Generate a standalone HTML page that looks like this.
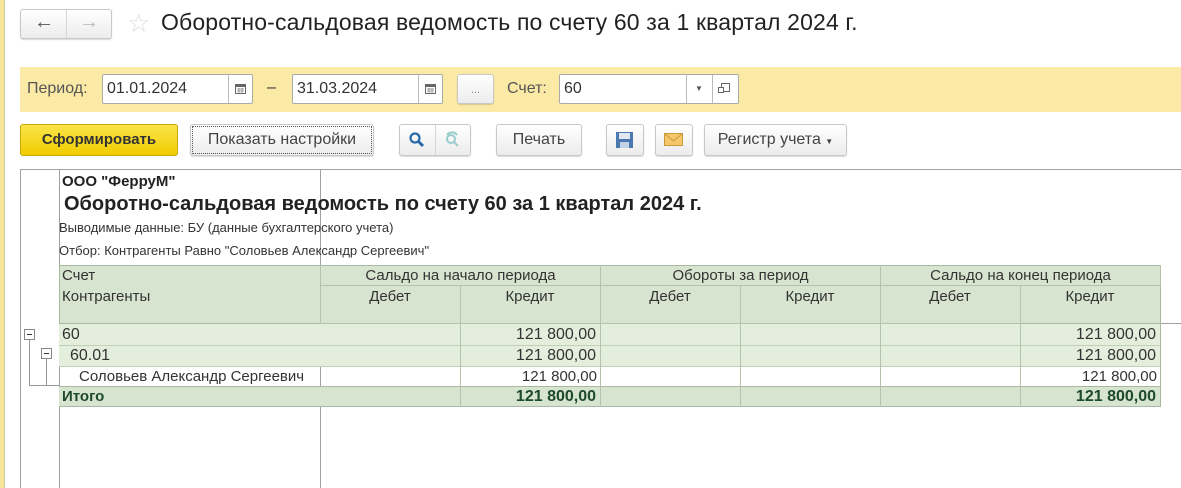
<!DOCTYPE html>
<html><head><meta charset="utf-8"><style>
*{margin:0;padding:0;box-sizing:border-box}
body{width:1181px;height:488px;overflow:hidden;background:#fff;font-family:"Liberation Sans",sans-serif;position:relative;color:#333}
.a{position:absolute}
.btn{position:absolute;border:1px solid #c8c8c8;border-radius:3px;background:linear-gradient(#fff,#ececec);box-shadow:0 1px 1px rgba(0,0,0,.15);font-size:15px;color:#444;text-align:center}
.inp{position:absolute;border:1px solid #aaa;border-radius:2px;background:#fff;font-size:16px;color:#333;padding-left:4px;line-height:28px}
.t{position:absolute;font-size:15px;white-space:nowrap}
.c{position:absolute;border-right:1px solid #b5c2ad;border-bottom:1px solid #b5c2ad}
</style></head><body>
<div class="a" style="left:0;top:0;width:5px;height:488px;background:#f8e59a;border-right:1px solid #c9c9a0"></div>
<div class="btn" style="left:20px;top:9px;width:92px;height:30px"></div>
<div class="a" style="left:66px;top:10px;width:1px;height:28px;background:#d5d5d5"></div>
<div class="t" style="left:34px;top:11px;font-size:20px;color:#555">&#8592;</div>
<div class="t" style="left:79px;top:11px;font-size:20px;color:#bbb">&#8594;</div>
<div class="t" style="left:127px;top:8px;font-size:26px;color:#ddd">&#9734;</div>
<div class="t" style="left:161px;top:9px;font-size:23px;letter-spacing:0.15px;color:#222">Оборотно-сальдовая ведомость по счету 60 за 1 квартал 2024 г.</div>
<div class="a" style="left:20px;top:67px;width:1161px;height:45px;background:#fbe9a6"></div>
<div class="t" style="left:27px;top:80px;font-size:16px;color:#555">Период:</div>
<div class="inp" style="left:102px;top:74px;width:151px;height:30px">01.01.2024</div>
<div class="a" style="left:228px;top:75px;width:1px;height:28px;background:#bbb"></div>
<svg class="a" style="left:235px;top:83px" width="11" height="11"><rect x="0.5" y="1.5" width="10" height="9" fill="#fff" stroke="#666"/><rect x="0.5" y="1.5" width="10" height="2.5" fill="#666"/><path d="M2 6h7M2 8h7M4 5v5M7 5v5" stroke="#888" stroke-width="0.8"/></svg>
<div class="t" style="left:267px;top:79px;font-size:16px">–</div>
<div class="inp" style="left:292px;top:74px;width:151px;height:30px">31.03.2024</div>
<div class="a" style="left:418px;top:75px;width:1px;height:28px;background:#bbb"></div>
<svg class="a" style="left:425px;top:83px" width="11" height="11"><rect x="0.5" y="1.5" width="10" height="9" fill="#fff" stroke="#666"/><rect x="0.5" y="1.5" width="10" height="2.5" fill="#666"/><path d="M2 6h7M2 8h7M4 5v5M7 5v5" stroke="#888" stroke-width="0.8"/></svg>
<div class="btn" style="left:457px;top:74px;width:37px;height:30px;line-height:30px;font-size:11px;color:#888">...</div>
<div class="t" style="left:507px;top:80px;font-size:16px;color:#555">Счет:</div>
<div class="inp" style="left:559px;top:74px;width:180px;height:30px">60</div>
<div class="a" style="left:686px;top:75px;width:1px;height:28px;background:#bbb"></div>
<div class="a" style="left:712px;top:75px;width:1px;height:28px;background:#bbb"></div>
<div class="t" style="left:695px;top:84px;font-size:8px;color:#555">&#9660;</div>
<div class="a" style="left:721px;top:83px;width:9px;height:9px;border:1px solid #666"></div>
<div class="a" style="left:718px;top:87px;width:6px;height:6px;border:1px solid #666;background:#fff"></div>
<div class="a" style="left:20px;top:124px;width:158px;height:32px;border:1px solid #c9a800;border-radius:3px;background:linear-gradient(#fbe44a,#f1cc00);font-weight:bold;font-size:15px;line-height:30px;text-align:center;color:#333">Сформировать</div>
<div class="btn" style="left:190px;top:124px;width:184px;height:32px;line-height:30px;outline:1px dotted #555;outline-offset:-3px;font-size:16px">Показать настройки</div>
<div class="btn" style="left:399px;top:124px;width:72px;height:32px"></div>
<div class="a" style="left:435px;top:125px;width:1px;height:30px;background:#d5d5d5"></div>
<svg class="a" style="left:408px;top:131px" width="18" height="18"><circle cx="7" cy="7" r="4.5" stroke="#2a6aa8" stroke-width="2.2" fill="none"/><path d="M10 10l5 5" stroke="#2a6aa8" stroke-width="3"/></svg>
<svg class="a" style="left:444px;top:131px" width="18" height="18"><circle cx="7" cy="8" r="4" stroke="#9cc" stroke-width="2" fill="none"/><path d="M10 11l4 4M3 4a6 6 0 0 1 10 0" stroke="#9cc" stroke-width="2" fill="none"/></svg>
<div class="btn" style="left:496px;top:124px;width:86px;height:32px;line-height:30px;font-size:16px">Печать</div>
<div class="btn" style="left:606px;top:124px;width:38px;height:32px"></div>
<svg class="a" style="left:615px;top:131px" width="20" height="18"><rect x="1" y="1" width="17" height="16" fill="#4a78b0"/><rect x="4" y="2" width="11" height="6" fill="#dfe8f3"/><rect x="5" y="11" width="9" height="6" fill="#c4d2e6"/></svg>
<div class="btn" style="left:655px;top:124px;width:38px;height:32px"></div>
<svg class="a" style="left:664px;top:133px" width="20" height="14"><rect x="0.5" y="0.5" width="18" height="12" fill="#f5c66a" stroke="#c99a3a"/><path d="M1 1l8.5 7 8.5-7" stroke="#c99a3a" fill="none"/></svg>
<div class="btn" style="left:704px;top:124px;width:143px;height:32px;line-height:30px;font-size:16px">Регистр учета <span style="font-size:8px">&#9660;</span></div>
<div class="a" style="left:20px;top:169px;width:1161px;height:1px;background:#a0a0a0"></div>
<div class="a" style="left:20px;top:169px;width:1px;height:319px;background:#a0a0a0"></div>
<div class="a" style="left:59px;top:169px;width:1px;height:319px;background:#a0a0a0"></div>
<div class="a" style="left:320px;top:169px;width:1px;height:319px;background:#a0a0a0"></div>
<div class="a" style="left:1160px;top:323px;width:21px;height:1px;background:#a0a0a0"></div>
<div class="t" style="left:62px;top:173px;font-weight:bold;font-size:15px;color:#222">ООО "ФерруМ"</div>
<div class="t" style="left:64px;top:193px;font-weight:bold;font-size:20px;color:#222">Оборотно-сальдовая ведомость по счету 60 за 1 квартал 2024 г.</div>
<div class="t" style="left:59px;top:220px;font-size:13px;color:#333">Выводимые данные: БУ (данные бухгалтерского учета)</div>
<div class="t" style="left:59px;top:243px;font-size:13px;color:#333">Отбор: Контрагенты Равно "Соловьев Александр Сергеевич"</div>
<div class="a" style="left:59px;top:265px;width:1102px;height:59px;background:#d7e4cf;border:1px solid #a9b8a0"></div>
<div class="c" style="left:59px;top:265px;width:262px;height:59px;border-bottom:none"></div>
<div class="c" style="left:320px;top:265px;width:281px;height:21px"></div>
<div class="c" style="left:600px;top:265px;width:281px;height:21px"></div>
<div class="c" style="left:880px;top:265px;width:281px;height:21px"></div>
<div class="c" style="left:320px;top:285px;width:141px;height:39px"></div>
<div class="c" style="left:460px;top:285px;width:141px;height:39px"></div>
<div class="c" style="left:600px;top:285px;width:141px;height:39px"></div>
<div class="c" style="left:740px;top:285px;width:141px;height:39px"></div>
<div class="c" style="left:880px;top:285px;width:141px;height:39px"></div>
<div class="t" style="left:62px;top:267px">Счет</div>
<div class="t" style="left:62px;top:288px">Контрагенты</div>
<div class="t" style="left:320px;top:267px;width:281px;text-align:center">Сальдо на начало периода</div>
<div class="t" style="left:600px;top:267px;width:281px;text-align:center">Обороты за период</div>
<div class="t" style="left:880px;top:267px;width:281px;text-align:center">Сальдо на конец периода</div>
<div class="t" style="left:320px;top:288px;width:140px;text-align:center">Дебет</div>
<div class="t" style="left:460px;top:288px;width:140px;text-align:center">Кредит</div>
<div class="t" style="left:600px;top:288px;width:140px;text-align:center">Дебет</div>
<div class="t" style="left:740px;top:288px;width:140px;text-align:center">Кредит</div>
<div class="t" style="left:880px;top:288px;width:140px;text-align:center">Дебет</div>
<div class="t" style="left:1020px;top:288px;width:140px;text-align:center">Кредит</div>
<div class="a" style="left:59px;top:324px;width:1102px;height:42px;background:#e4eedc"></div>
<div class="a" style="left:59px;top:386px;width:1102px;height:21px;background:#d7e4cf;border-top:1px solid #a9b8a0;border-bottom:1px solid #a9b8a0"></div>
<div class="a" style="left:59px;top:345px;width:1102px;height:1px;background:#c2d0ba"></div>
<div class="a" style="left:59px;top:366px;width:1102px;height:1px;background:#c2d0ba"></div>
<div class="a" style="left:1160px;top:324px;width:1px;height:83px;background:#a9b8a0"></div>
<div class="a" style="left:460px;top:324px;width:1px;height:83px;background:#b5c2ad"></div>
<div class="a" style="left:600px;top:324px;width:1px;height:83px;background:#b5c2ad"></div>
<div class="a" style="left:740px;top:324px;width:1px;height:83px;background:#b5c2ad"></div>
<div class="a" style="left:880px;top:324px;width:1px;height:83px;background:#b5c2ad"></div>
<div class="a" style="left:1020px;top:324px;width:1px;height:83px;background:#b5c2ad"></div>
<div class="t" style="left:62px;top:326px;font-size:16px">60</div>
<div class="t" style="left:70px;top:347px;font-size:16px">60.01</div>
<div class="t" style="left:79px;top:368px;font-size:15px">Соловьев Александр Сергеевич</div>
<div class="t" style="left:62px;top:388px;font-size:15px;font-weight:bold;color:#1d4a2d">Итого</div>
<div class="t" style="left:460px;top:326px;width:136px;text-align:right;font-size:16px">121 800,00</div>
<div class="t" style="left:460px;top:347px;width:136px;text-align:right;font-size:16px">121 800,00</div>
<div class="t" style="left:460px;top:368px;width:137px;text-align:right">121 800,00</div>
<div class="t" style="left:460px;top:388px;width:136px;text-align:right;font-size:16px;font-weight:bold;color:#1d4a2d">121 800,00</div>
<div class="t" style="left:1020px;top:326px;width:136px;text-align:right;font-size:16px">121 800,00</div>
<div class="t" style="left:1020px;top:347px;width:136px;text-align:right;font-size:16px">121 800,00</div>
<div class="t" style="left:1020px;top:368px;width:137px;text-align:right">121 800,00</div>
<div class="t" style="left:1020px;top:388px;width:136px;text-align:right;font-size:16px;font-weight:bold;color:#1d4a2d">121 800,00</div>
<div class="a" style="left:24px;top:329px;width:11px;height:11px;border:1px solid #888;background:#fff"></div>
<div class="a" style="left:27px;top:334px;width:5px;height:1px;background:#333"></div>
<div class="a" style="left:29px;top:340px;width:1px;height:45px;background:#999"></div>
<div class="a" style="left:29px;top:385px;width:30px;height:1px;background:#999"></div>
<div class="a" style="left:41px;top:348px;width:11px;height:11px;border:1px solid #888;background:#fff"></div>
<div class="a" style="left:44px;top:353px;width:5px;height:1px;background:#333"></div>
<div class="a" style="left:46px;top:359px;width:1px;height:26px;background:#999"></div>
</body></html>
